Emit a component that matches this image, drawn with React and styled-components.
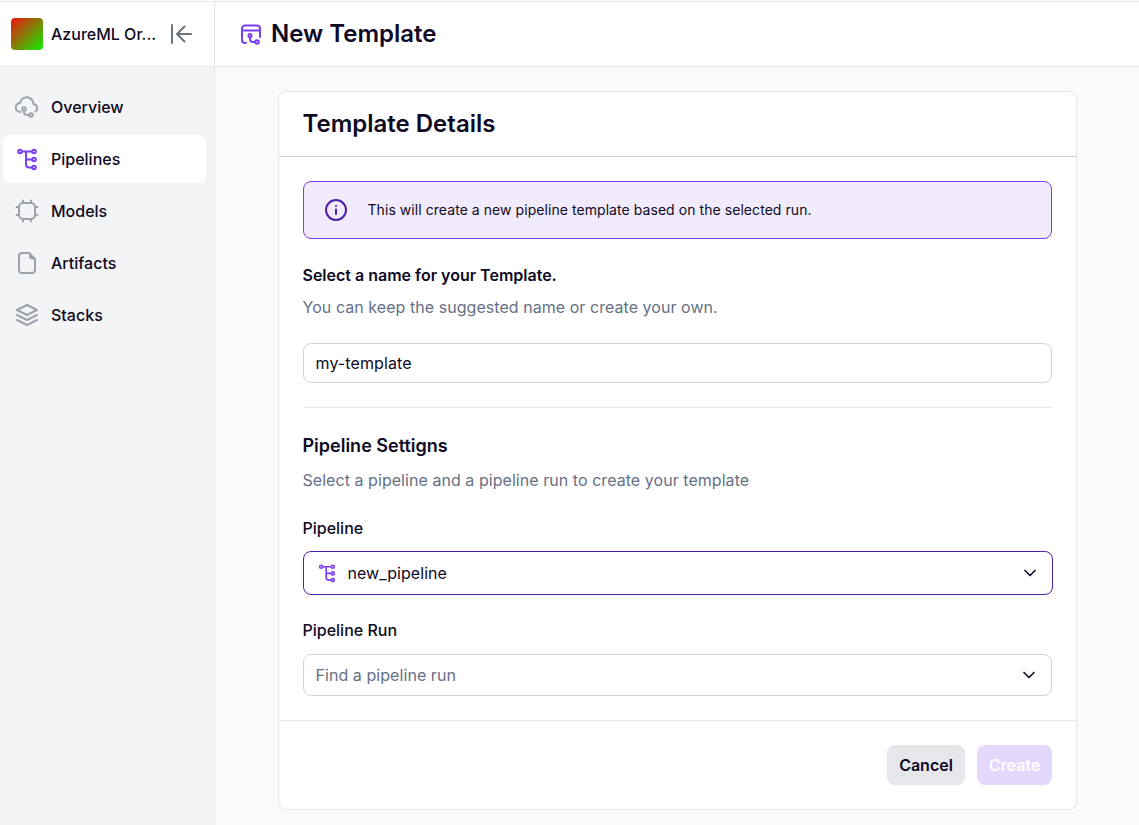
import React from "react";
import styled, { createGlobalStyle } from "styled-components";

const GlobalStyle = createGlobalStyle`
  html, body {
    margin: 0;
    padding: 0;
    height: 100%;
    background: #f9fafb;
    overflow: hidden;
  }
  * {
    box-sizing: border-box;
  }
  body {
    font-family: Inter, "Liberation Sans", sans-serif;
    color: #0f0a24;
  }
`;

const Page = styled.div`
  display: flex;
  flex-direction: column;
  height: 825px;
  padding-top: 1px;
  background: #fff;
`;

const Shell = styled.div`
  display: flex;
  flex: 1;
  min-height: 0;
  border-top: 1px solid #e5e7eb;
`;

const Sidebar = styled.aside`
  width: 215px;
  flex: none;
  background: #f3f4f6;
  border-right: 1px solid #e5e7eb;
`;

const OrgBar = styled.div`
  display: flex;
  align-items: center;
  height: 65px;
  padding-left: 11px;
  background: #fff;
  border-bottom: 1px solid #e5e7eb;
`;

const OrgLogo = styled.div`
  width: 32px;
  height: 32px;
  border-radius: 4px;
  background: linear-gradient(135deg, #f01010, #10f000);
`;

const OrgName = styled.span`
  margin-left: 8px;
  width: 108px;
  font-size: 16px;
  font-weight: 500;
  white-space: nowrap;
`;

const CollapseIcon = styled.svg`
  width: 24px;
  height: 24px;
  color: #6b7280;
  margin-left: 9px;
`;

const Nav = styled.nav`
  display: flex;
  flex-direction: column;
  gap: 4px;
  padding: 16px 8px 0 3px;
`;

const NavItem = styled.a`
  display: flex;
  align-items: center;
  gap: 12px;
  height: 48px;
  padding-left: 12px;
  border-radius: 8px;
  font-size: 16px;
  font-weight: 500;
  background: ${(p) => (p.$active ? "#fff" : "transparent")};
  color: #0f0a24;
`;

const NavIcon = styled.svg`
  width: 24px;
  height: 24px;
  flex: none;
  color: ${(p) => (p.$active ? "#7a3ef4" : "#9ca3af")};
`;

const Main = styled.main`
  flex: 1;
  min-width: 0;
  display: flex;
  flex-direction: column;
`;

const TopBar = styled.header`
  display: flex;
  align-items: center;
  gap: 8px;
  height: 65px;
  padding-left: 24px;
  background: #fff;
  border-bottom: 1px solid #e5e7eb;
`;

const TopIcon = styled.svg`
  width: 24px;
  height: 24px;
  color: #7a3ef4;
`;

const PageTitle = styled.h1`
  margin: 0;
  font-size: 24px;
  line-height: 32px;
  font-weight: 600;
`;

const Content = styled.div`
  flex: 1;
  background: #f9fafb;
  padding: 24px 62px 0 63px;
`;

const Card = styled.section`
  background: #fff;
  border: 1px solid #e5e7eb;
  border-radius: 8px;
  width: 799px;
`;

const CardHeader = styled.div`
  display: flex;
  align-items: center;
  height: 65px;
  padding-left: 23.5px;
  border-bottom: 1px solid #d1d5db;
`;

const CardTitle = styled.h2`
  margin: 0;
  font-size: 24px;
  line-height: 32px;
  font-weight: 600;
`;

const CardBody = styled.div`
  padding: 24px 24px 24px;
`;

const Notice = styled.div`
  display: flex;
  align-items: center;
  gap: 19.5px;
  height: 58px;
  padding-left: 20px;
  background: #f1ebfd;
  border: 1px solid #7a3ef4;
  border-radius: 8px;
  font-size: 14px;
  line-height: 20px;
  letter-spacing: 0.06px;
`;

const NoticeIcon = styled.svg`
  width: 24px;
  height: 24px;
  flex: none;
  color: #4d1fa8;
`;

const SectionTitle = styled.div`
  font-size: ${(p) => p.$size || 16}px;
  line-height: ${(p) => p.$line || 24}px;
  font-weight: 600;
  margin-top: ${(p) => p.$top || 0}px;
  margin-left: -0.5px;
`;

const Hint = styled.p`
  margin: 8px 0 0 -0.5px;
  font-size: 16px;
  line-height: 24px;
  letter-spacing: 0.05px;
  color: #667085;
`;

const TextInput = styled.div`
  display: flex;
  align-items: center;
  height: 40px;
  margin-top: 24px;
  padding-left: 11.5px;
  border: 1px solid #d1d5db;
  border-radius: 8px;
  font-size: 16px;
  letter-spacing: 0.1px;
`;

const Divider = styled.hr`
  margin: 24px 0;
  border: 0;
  border-top: 1px solid #e5e7eb;
`;

const FieldLabel = styled.div`
  font-size: 16px;
  line-height: 24px;
  font-weight: 500;
  margin-top: ${(p) => p.$top}px;
  margin-left: -0.5px;
`;

const Select = styled.div`
  display: flex;
  align-items: center;
  height: ${(p) => (p.$focus ? 44 : 42)}px;
  margin-top: ${(p) => (p.$focus ? 11 : 12)}px;
  margin-right: ${(p) => (p.$focus ? -1 : 0)}px;
  padding: 0 12px 0 ${(p) => (p.$focus ? 12.5 : 11.5)}px;
  border: 1px solid ${(p) => (p.$focus ? "#4d1fa8" : "#d1d5db")};
  border-radius: 8px;
  font-size: 16px;
  letter-spacing: 0.06px;
  color: ${(p) => (p.$placeholder ? "#667085" : "#0f0a24")};
`;

const SelectIcon = styled.svg`
  width: 20px;
  height: 20px;
  color: #7a3ef4;
  margin-right: 11px;
`;

const SelectValue = styled.span`
  flex: 1;
`;

const Chevron = styled.svg`
  width: 20px;
  height: 20px;
  color: #0f0a24;
`;

const CardFooter = styled.div`
  display: flex;
  justify-content: flex-end;
  gap: 12px;
  padding: 24px;
  border-top: 1px solid #e5e7eb;
`;

const Button = styled.button`
  width: ${(p) => p.$width}px;
  height: 40px;
  padding: 0;
  border: 0;
  border-radius: 8px;
  font-family: inherit;
  font-size: 16px;
  font-weight: 600;
  background: ${(p) => (p.$primary ? "#e4d8fc" : "#e5e7eb")};
  color: ${(p) => (p.$primary ? "#fff" : "#0f0a24")};
`;

const PipelinePath = () => (
  <g fill="none" stroke="currentColor" strokeWidth="2" strokeLinecap="round" strokeLinejoin="round">
    <circle cx="5" cy="4.5" r="1.8" />
    <circle cx="19" cy="4.5" r="1.8" />
    <circle cx="19" cy="12.5" r="1.8" />
    <circle cx="19" cy="20.5" r="1.8" />
    <path d="M7 4.5h10M11 4.5v13a3 3 0 0 0 3 3h3M11 12.5h6" />
  </g>
);

const IconStroke = ({ children, as: Comp, ...rest }) => (
  <Comp viewBox="0 0 24 24" fill="none" stroke="currentColor" strokeWidth="2" strokeLinecap="round" strokeLinejoin="round" {...rest}>
    {children}
  </Comp>
);

const NAV = [
  {
    label: "Overview",
    icon: (
      <>
        <path d="M5.500 17a4.500 4.500 0 0 1-.5-9 6.800 6.800 0 0 1 13.500 1 4.200 4.200 0 0 1 2 7.500" />
        <circle cx="9" cy="14" r="1.800" />
        <circle cx="16" cy="20" r="1.800" />
        <path d="M9 16v1a3 3 0 0 0 3 3h2.200" />
      </>
    ),
  },
  {
    label: "Pipelines",
    active: true,
    pipeline: true,
  },
  {
    label: "Models",
    icon: (
      <>
        <rect x="4" y="4" width="16" height="16" rx="4" />
        <path d="M8 1.500V4M16 1.500V4M8 20v2.500M16 20v2.500M1.500 8H4M1.500 16H4M20 8h2.500M20 16h2.500" />
      </>
    ),
  },
  {
    label: "Artifacts",
    icon: (
      <>
        <path d="M14 2H7a3 3 0 0 0-3 3v14a3 3 0 0 0 3 3h10a3 3 0 0 0 3-3V8z" />
        <path d="M14.500 3v3a2 2 0 0 0 2 2H20z" fill="currentColor" strokeWidth="1" />
      </>
    ),
  },
  {
    label: "Stacks",
    icon: (
      <>
        <path d="M12 2 2 7l10 5 10-5z" />
        <path d="m2 12 10 5 10-5" />
        <path d="m2 17 10 5 10-5" />
      </>
    ),
  },
];

export default function App() {
  return (
    <>
      <GlobalStyle />
      <Page>
        <Shell>
          <Sidebar>
            <OrgBar>
              <OrgLogo />
              <OrgName>AzureML Or...</OrgName>
              <IconStroke as={CollapseIcon}>
                <path d="M4 3v18M23 12H9M16.500 4.500 9 12l7.500 7.500" />
              </IconStroke>
            </OrgBar>
            <Nav>
              {NAV.map((item) => (
                <NavItem key={item.label} $active={item.active}>
                  {item.pipeline ? (
                    <NavIcon viewBox="0 0 24 24" $active>
                      <PipelinePath />
                    </NavIcon>
                  ) : (
                    <IconStroke as={NavIcon}>{item.icon}</IconStroke>
                  )}
                  {item.label}
                </NavItem>
              ))}
            </Nav>
          </Sidebar>
          <Main>
            <TopBar>
              <IconStroke as={TopIcon}>
                <path d="M3 8.500h18M7 21H6a3 3 0 0 1-3-3V6.500a3 3 0 0 1 3-3h12a3 3 0 0 1 3 3V15" />
                <circle cx="11" cy="13.500" r="1.600" />
                <circle cx="18" cy="20" r="1.800" />
                <path d="M11 15v2a3 3 0 0 0 3 3h2.200" />
              </IconStroke>
              <PageTitle>New Template</PageTitle>
            </TopBar>
            <Content>
              <Card>
                <CardHeader>
                  <CardTitle>Template Details</CardTitle>
                </CardHeader>
                <CardBody>
                  <Notice>
                    <IconStroke as={NoticeIcon}>
                      <circle cx="12" cy="12" r="10" />
                      <path d="M12 16v-4.500M12 8h.01" />
                    </IconStroke>
                    This will create a new pipeline template based on the selected run.
                  </Notice>
                  <SectionTitle $top={24}>Select a name for your Template.</SectionTitle>
                  <Hint>You can keep the suggested name or create your own.</Hint>
                  <TextInput>my-template</TextInput>
                  <Divider />
                  <SectionTitle $size={18} $line={28}>Pipeline Settigns</SectionTitle>
                  <Hint>Select a pipeline and a pipeline run to create your template</Hint>
                  <FieldLabel $top={24}>Pipeline</FieldLabel>
                  <Select $focus>
                    <SelectIcon viewBox="0 0 24 24">
                      <PipelinePath />
                    </SelectIcon>
                    <SelectValue>new_pipeline</SelectValue>
                    <IconStroke as={Chevron}>
                      <path d="m6 9 6 6 6-6" />
                    </IconStroke>
                  </Select>
                  <FieldLabel $top={23}>Pipeline Run</FieldLabel>
                  <Select $placeholder>
                    <SelectValue>Find a pipeline run</SelectValue>
                    <IconStroke as={Chevron}>
                      <path d="m6 9 6 6 6-6" />
                    </IconStroke>
                  </Select>
                </CardBody>
                <CardFooter>
                  <Button $width={78}>Cancel</Button>
                  <Button $primary $width={75}>Create</Button>
                </CardFooter>
              </Card>
            </Content>
          </Main>
        </Shell>
      </Page>
    </>
  );
}
